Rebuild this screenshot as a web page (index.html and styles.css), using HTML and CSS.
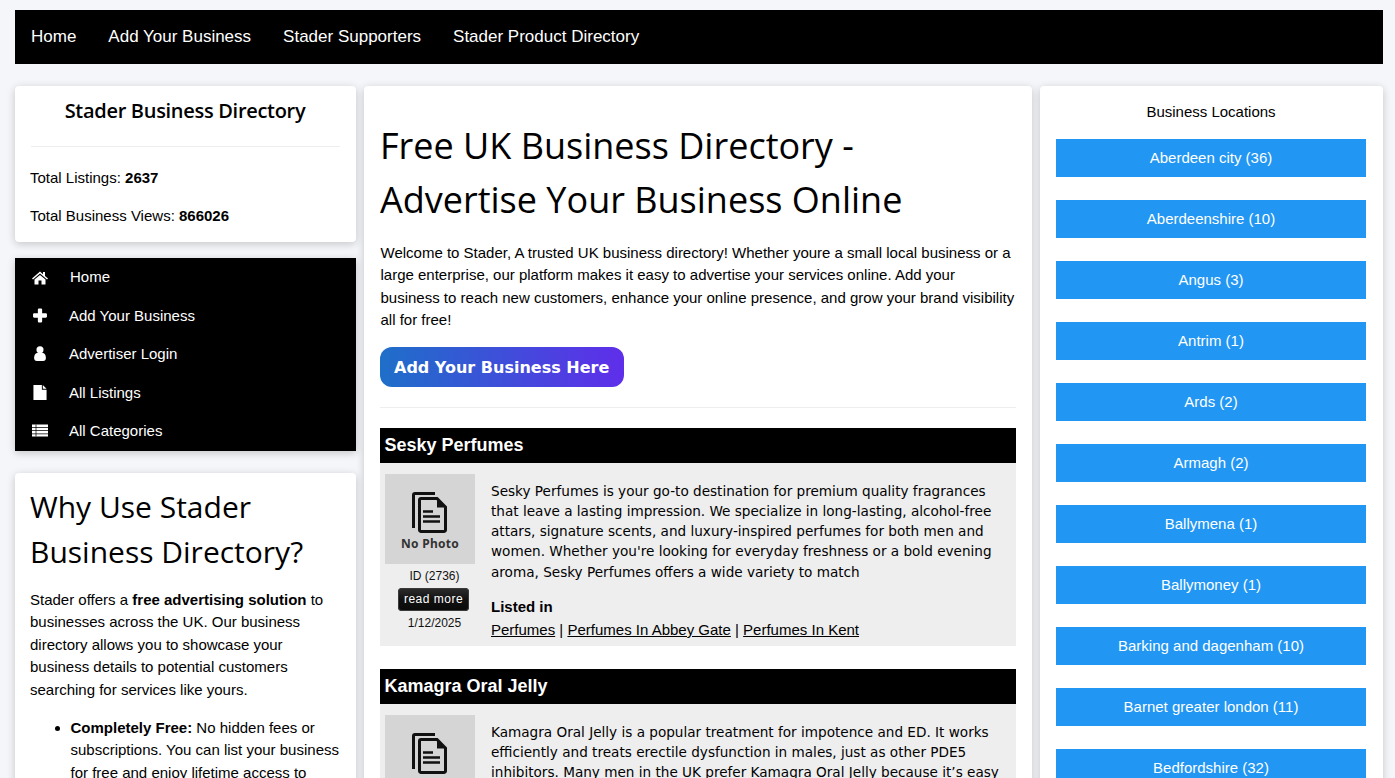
FILE: index.html
```html
<!DOCTYPE html>
<html>
<head>
	<title>Stader Business Directory</title>
	<link rel="stylesheet" href="styles.css">
</head>
<body>
	<svg class="defs" width="0" height="0">
		<symbol id="nophoto" viewBox="0 0 90 90">
			<path d="M50 19.500H30a1.500 1.500 0 0 0-1.500 1.500V54" fill="none" stroke="#111" stroke-width="3"/>
			<path d="M36 24.500H52l8.500 8.500V56a1.500 1.500 0 0 1-1.500 1.500H36a1.500 1.500 0 0 1-1.500-1.500V26a1.500 1.500 0 0 1 1.500-1.500z" fill="none" stroke="#111" stroke-width="3"/>
			<path d="M52 25v8.500h8z" fill="#111"/>
			<path d="M38 37.500h10M38 42.500h17M38 47.500h17" stroke="#111" stroke-width="2.600"/>
		</symbol>
	</svg>
	<nav class="topnav">
		<a href="#">Home</a>
		<a href="#">Add Your Business</a>
		<a href="#">Stader Supporters</a>
		<a href="#">Stader Product Directory</a>
	</nav>
	<div class="columns">
		<div class="leftcol">
			<div class="card stats">
				<h3>Stader Business Directory</h3>
				<hr>
				<p>Total Listings: <b>2637</b></p>
				<p>Total Business Views: <b>866026</b></p>
			</div>
			<ul class="sidemenu">
				<li><svg viewBox="0 0 16 14"><path d="M8 1 0 8l1 1 7-6 7 6 1-1-3-2.600V1.500h-2v2.200zM8 4.500 2.500 9v5h4v-4h3v4h4V9z" fill="#fff"/></svg><a class="first" href="#">Home</a></li>
				<li><svg viewBox="0 0 14 14"><path d="M5 1.500a1 1 0 0 1 1-1h2a1 1 0 0 1 1 1V5h3.500a1 1 0 0 1 1 1v2a1 1 0 0 1-1 1H9v3.500a1 1 0 0 1-1 1H6a1 1 0 0 1-1-1V9H1.500a1 1 0 0 1-1-1V6a1 1 0 0 1 1-1H5z" fill="#fff"/></svg><a href="#">Add Your Business</a></li>
				<li><svg viewBox="0 0 14 14"><circle cx="7" cy="3.500" r="3.300" fill="#fff"/><path d="M1.500 11c0-3 1.500-4.500 3-4.500h5c1.500 0 3 1.500 3 4.500 0 2-1 3-2.500 3H4c-1.500 0-2.500-1-2.500-3z" fill="#fff"/></svg><a href="#">Advertiser Login</a></li>
				<li><svg viewBox="0 0 14 16"><path d="M0 0h9v5h5v11H0zM10 0l4 4h-4z" fill="#fff"/></svg><a href="#">All Listings</a></li>
				<li><svg viewBox="0 0 16 14"><path d="M0 1h16v2.500H0zM0 4.300h16v2.400H0zM0 7.500h16v2.400H0zM0 10.700h16V13H0z" fill="#fff"/><path d="M4 1v12" stroke="#000" stroke-width=".7"/></svg><a href="#">All Categories</a></li>
			</ul>
			<div class="card why">
				<h2>Why Use Stader Business Directory?</h2>
				<p>Stader offers a <b>free advertising solution</b> to businesses across the UK. Our business directory allows you to showcase your business details to potential customers searching for services like yours.</p>
				<ul>
					<li><b>Completely Free:</b> No hidden fees or subscriptions. You can list your business for free and enjoy lifetime access to your listing.</li>
				</ul>
			</div>
		</div>

		<div class="card main">
			<h1>Free UK Business Directory - Advertise Your Business Online</h1>
			<p class="intro">Welcome to Stader, A trusted UK business directory! Whether youre a small local business or a large enterprise, our platform makes it easy to advertise your services online. Add your business to reach new customers, enhance your online presence, and grow your brand visibility all for free!</p>
			<a class="addbtn" href="#">Add Your Business Here</a>
			<hr>

			<div class="listing">
				<h4>Sesky Perfumes</h4>
				<div class="listing_body">
					<div class="thumb">
						<div class="photo"><svg><use href="#nophoto"/></svg><span>No Photo</span></div>
						<div class="small_text">ID (2736)</div>
						<a class="readmore" href="#">read more</a>
						<div class="small_text">1/12/2025</div>
					</div>
					<div class="details">
						<p class="desc">Sesky Perfumes is your go-to destination for premium quality fragrances that leave a lasting impression. We specialize in long-lasting, alcohol-free attars, signature scents, and luxury-inspired perfumes for both men and women. Whether you're looking for everyday freshness or a bold evening aroma, Sesky Perfumes offers a wide variety to match</p>
						<div class="listed"><b>Listed in</b></div>
						<div class="cats"><a href="#">Perfumes</a> | <a href="#">Perfumes In Abbey Gate</a> | <a href="#">Perfumes In Kent</a></div>
					</div>
				</div>
			</div>

			<div class="listing">
				<h4>Kamagra Oral Jelly</h4>
				<div class="listing_body">
					<div class="thumb">
						<div class="photo"><svg><use href="#nophoto"/></svg><span>No Photo</span></div>
						<div class="small_text">ID (2735)</div>
					</div>
					<div class="details">
						<p class="desc">Kamagra Oral Jelly is a popular treatment for impotence and ED. It works efficiently and treats erectile dysfunction in males, just as other PDE5 inhibitors. Many men in the UK prefer Kamagra Oral Jelly because it’s easy</p>
					</div>
				</div>
			</div>
		</div>

		<div class="card locations">
			<div class="loc_title">Business Locations</div>
			<a href="#">Aberdeen city (36)</a>
			<a href="#">Aberdeenshire (10)</a>
			<a href="#">Angus (3)</a>
			<a href="#">Antrim (1)</a>
			<a href="#">Ards (2)</a>
			<a href="#">Armagh (2)</a>
			<a href="#">Ballymena (1)</a>
			<a href="#">Ballymoney (1)</a>
			<a href="#">Barking and dagenham (10)</a>
			<a href="#">Barnet greater london (11)</a>
			<a href="#">Bedfordshire (32)</a>
		</div>
	</div>
</body>
</html>
```

FILE: styles.css
```css
html, body {
	height: 778px;
	overflow: hidden;
}
body {
	margin: 0;
	padding: 10px 12px 0 15px;
	background: #f4f6f9;
	font-family: "Liberation Sans", Arial, sans-serif;
	color: #000;
	box-sizing: border-box;
}
.defs {
	display: block;
	height: 0;
}
a {
	color: inherit;
}
.topnav {
	display: flex;
	gap: 32px;
	background: #000;
	height: 54px;
	padding-left: 16px;
	align-items: center;
}
.topnav a {
	color: #fff;
	text-decoration: none;
	font-size: 17px;
}
.columns {
	display: grid;
	grid-template-columns: 341px 668px 343px;
	gap: 8px;
	margin-top: 22px;
	align-items: start;
}
.card {
	background: #fff;
	border-radius: 4px;
	box-shadow: 0 2px 8px rgba(0, 0, 0, 0.2);
}
hr {
	border: 0;
	border-top: 1px solid #eee;
	margin: 0;
}
.leftcol {
	display: flex;
	flex-direction: column;
	gap: 16px;
}
.stats {
	padding: 0 16px 0 15px;
	height: 156px;
	font-size: 15px;
}
.stats h3 {
	font-family: "Open Sans", "Noto Sans", sans-serif;
	font-size: 20px;
	font-weight: 600;
	letter-spacing: -0.3px;
	text-align: center;
	margin: 0;
	padding-top: 11px;
	height: 49px;
}
.stats hr {
	margin-left: 1px;
}
.stats p {
	margin: 22px 0 0;
	line-height: 16px;
}
.stats hr + p {
	margin-top: 23px;
}
.sidemenu {
	list-style: none;
	margin: 0;
	padding: 0;
	background: #000;
	height: 193px;
	box-shadow: 0 2px 8px rgba(0, 0, 0, 0.2);
}
.sidemenu li {
	display: flex;
	align-items: center;
	height: 38.500px;
	padding-left: 17px;
}
.sidemenu li:first-child {
	height: 38px;
}
.sidemenu svg {
	width: 16px;
	height: 15px;
}
.sidemenu a {
	color: #fff;
	text-decoration: none;
	font-size: 15px;
	margin-left: 21px;
}
.sidemenu a.first {
	margin-left: 22px;
	margin-bottom: 2px;
}
.why {
	padding: 0 15px;
	margin-top: 6px;
	font-size: 15px;
	line-height: 22.400px;
}
.why h2 {
	font-family: "Open Sans", "Noto Sans", sans-serif;
	font-size: 30px;
	font-weight: 400;
	line-height: 45px;
	margin: 0;
	padding-top: 11px;
}
.why p {
	margin: 15px 0 16px;
}
.why ul {
	margin: 0;
	padding: 0 1.800px 0 40.500px;
}
.main {
	padding: 0 16px;
	height: 720px;
	overflow: hidden;
}
.main h1 {
	font-family: "Open Sans", "Noto Sans", sans-serif;
	font-size: 36px;
	font-weight: 400;
	line-height: 54px;
	margin: 33px 0 0;
}
.intro {
	font-size: 15px;
	line-height: 22.400px;
	margin: 15px 0 15px 0.500px;
}
.addbtn {
	display: inline-block;
	background: linear-gradient(90deg, #1e6fc9, #5f2eea);
	color: #fff;
	font-family: "DejaVu Sans", sans-serif;
	font-weight: bold;
	font-size: 16px;
	line-height: 39px;
	padding: 1px 15px 0 14px;
	border-radius: 12px;
	text-decoration: none;
}
.main hr {
	margin-top: 20px;
}
.listing {
	margin-top: 20px;
	margin-bottom: 23px;
}
.listing h4 {
	background: #000;
	color: #fff;
	font-size: 18px;
	line-height: 35px;
	margin: 0;
	padding-left: 4.500px;
}
.listing_body {
	display: flex;
	background: #eee;
	padding: 11px 5px 7px;
}
.thumb {
	width: 90px;
	flex: none;
	text-align: center;
}
.photo {
	width: 90px;
	height: 90px;
	background: #d5d5d5;
	position: relative;
}
.photo svg {
	width: 90px;
	height: 90px;
	display: block;
}
.photo span {
	position: absolute;
	left: 0;
	right: 0;
	top: 61px;
	font-family: "Noto Sans", sans-serif;
	font-weight: bold;
	font-size: 12px;
	letter-spacing: 0.3px;
	color: #333;
}
.small_text {
	font-size: 12px;
	line-height: 14px;
	margin-top: 5px;
	padding-left: 9px;
	color: #111;
}
.readmore {
	display: block;
	width: 71px;
	margin: 5px 0 0 13px;
	height: 23px;
	line-height: 23px;
	background: linear-gradient(#2e2e2e, #111 50%, #0a0a0a);
	box-shadow: inset 0 0 0 1px #3a3a3a;
	border-radius: 4px;
	color: #fff;
	text-decoration: none;
	font-size: 12px;
	letter-spacing: 0.5px;
	box-sizing: border-box;
}
.readmore + .small_text {
	margin-top: 5px;
}
.details {
	margin-left: 16px;
	font-size: 15px;
}
.desc {
	font-family: "DejaVu Sans", sans-serif;
	font-size: 13.600px;
	line-height: 20.250px;
	margin: 7px 0 0;
}
.listed {
	margin-top: 16px;
	line-height: 18px;
	font-size: 15px;
}
.cats {
	margin-top: 5px;
	line-height: 18px;
}
.locations {
	padding: 0 17px 0 16px;
	height: 720px;
	overflow: hidden;
}
.loc_title {
	text-align: center;
	font-size: 15px;
	line-height: 18px;
	padding-top: 17px;
	margin-bottom: 18px;
}
.locations a {
	display: block;
	background: #2196f3;
	color: #fff;
	text-align: center;
	text-decoration: none;
	font-size: 15px;
	line-height: 38px;
	margin-bottom: 23px;
}
```
